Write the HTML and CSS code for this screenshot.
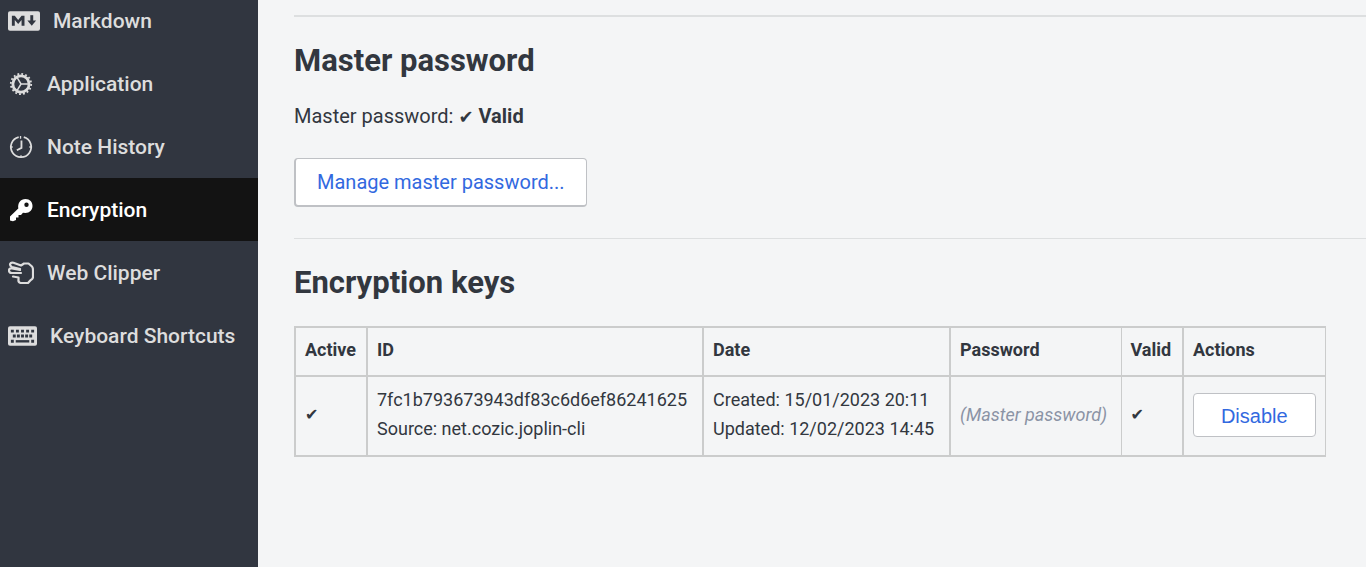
FILE: index.html
```html
<!DOCTYPE html>
<html lang="en">
<head>
<meta charset="utf-8">
<title>Encryption</title>
<link rel="stylesheet" href="styles.css">
</head>
<body>
<div class="app">
  <nav class="sidebar">
    <a class="item" href="#markdown">
      <svg class="icon icon-xl" viewBox="0 0 33 22" aria-hidden="true"><rect y="1" width="33" height="20" rx="2" fill="currentColor"/><path d="M4 16V5.500h3l3.500 4.500L14 5.500h3V16h-3V10l-3.500 4.200L7 10v6z" fill="#313640"/><path d="M24.500 5v7" stroke="#313640" stroke-width="3"/><path d="M20 10.500h9l-4.500 5.500z" fill="#313640"/></svg>
      <span>Markdown</span></a>
    <a class="item" href="#application">
      <svg class="icon" viewBox="0 0 26 26" fill="none" stroke="currentColor" aria-hidden="true"><circle cx="13" cy="13" r="8.800" stroke-width="3"/><circle cx="13" cy="13" r="11" stroke-width="2" stroke-dasharray="2 2.320"/><path d="M13 13h9M13 13L8.500 5.500M13 13L8.500 20.500" stroke-width="1.600"/></svg>
      <span>Application</span></a>
    <a class="item" href="#history">
      <svg class="icon" viewBox="0 0 26 26" fill="none" stroke="currentColor" aria-hidden="true"><path d="M16 2.400A11 11 0 1 1 10.500 2.300" stroke-width="1.900"/><path d="M13.500 6v8L8.500 16.500" stroke-width="2"/><path d="M12.500 1v3M2 13h2M22 13h2M13 22v2" stroke-width="1.400"/></svg>
      <span>Note History</span></a>
    <a class="item active" href="#encryption" aria-current="page">
      <svg class="icon" viewBox="0 0 26 24" aria-hidden="true"><path fill="currentColor" fill-rule="evenodd" d="M17.500 1C22 1 24.500 4 24.500 8s-3 7-7 7l-2.500-.3-2 2.300h-2.500v2.500H8V22l-3 1.200-3-.7v-4L10.300 10.500C9.500 5 12.500 1 17.500 1zM18.500 4.500a2.200 2.200 0 1 0 0 4.400 2.200 2.200 0 1 0 0-4.400z"/></svg>
      <span>Encryption</span></a>
    <a class="item" href="#clipper">
      <svg class="icon" viewBox="0 0 26 24" fill="none" stroke="currentColor" stroke-width="2.200" stroke-linejoin="round" stroke-linecap="round" aria-hidden="true"><path d="M12 8L4 6Q1.500 5 2.200 2.800 3 1 5.500 1.800L13 4.500 16 2.500h4.500L24 5.500Q25 7 25 9v7q0 2-2.500 3.200L20 22h-7.500Q10 21.500 10.500 18.500V16.500L5 15.500M13 12H4Q1 12 1 9.500T4 7.500L12 9"/></svg>
      <span>Web Clipper</span></a>
    <a class="item" href="#shortcuts">
      <svg class="icon icon-lg" viewBox="0 0 30 22" aria-hidden="true"><rect y="1" width="30" height="20" rx="2" fill="currentColor"/><path d="M3 6h24M3 16.500h3M24 16.500h3" stroke="#313640" stroke-width="3" stroke-dasharray="3 2.250"/><path d="M5 11h20" stroke="#313640" stroke-width="3" stroke-dasharray="3 1.250"/><path d="M8 16.500h14" stroke="#313640" stroke-width="2.500"/></svg>
      <span>Keyboard Shortcuts</span></a>
  </nav>
  <main class="content">
    <section class="section">
      <h2 class="title">Master password</h2>
      <p class="status">Master password: <b><span class="tick tick-large">✔</span> Valid</b></p>
      <button class="button button-large" type="button">Manage master password...</button>
    </section>
    <section class="section section-keys">
      <h2 class="title">Encryption keys</h2>
      <table class="keys">
        <colgroup><col class="col-active"><col class="col-id"><col class="col-date"><col class="col-password"><col class="col-valid"><col class="col-actions"></colgroup>
        <thead><tr><th>Active</th><th>ID</th><th>Date</th><th>Password</th><th>Valid</th><th>Actions</th></tr></thead>
        <tbody><tr>
          <td><span class="tick">✔</span></td>
          <td>7fc1b793673943df83c6d6ef86241625<br>Source: net.cozic.joplin-cli</td>
          <td>Created: 15/01/2023 20:11<br>Updated: 12/02/2023 14:45</td>
          <td class="muted">(Master password)</td>
          <td><span class="tick">✔</span></td>
          <td><button class="button button-small" type="button">Disable</button></td>
        </tr></tbody>
      </table>
    </section>
  </main>
</div>
</body>
</html>
```
FILE: styles.css
```css
* { box-sizing: border-box; }
body {
  margin: 0;
  background: #f4f5f6;
  color: #32373f;
  font-family: Roboto, "Liberation Sans", sans-serif;
  font-size: 20px;
  line-height: 29px;
}
.app { display: flex; min-height: 100vh; overflow: hidden; }
.sidebar {
  flex: 0 0 258px;
  margin-top: -11px;
  background: #313640;
}
.item {
  display: flex;
  align-items: center;
  gap: 13px;
  height: 63px;
  padding: 1px 0 0 8px;
  color: #dddddd;
  font-size: 21px;
  font-weight: 500;
  text-decoration: none;
  white-space: nowrap;
}
.item.active { background: #131313; color: #ffffff; }
.icon { flex: none; width: 26px; height: 24px; }
.icon-lg { width: 29px; height: 22px; }
.icon-xl { width: 32px; height: 22px; }
.content { flex: 1; min-width: 0; padding: 15px 0 0 36px; }
.section { border-top: 2px solid #dddfe0; padding-top: 25px; }
.section-keys { margin-top: 31px; border-top-width: 1px; }
.title { margin: 0; font-size: 31px; font-weight: 700; line-height: 38px; }
.status { margin: 21px 0 26px; line-height: 30px; }
.tick { font-family: "DejaVu Sans", sans-serif; font-size: 16px; font-weight: 400; }
.tick-large { font-size: 18px; }
.button {
  display: block;
  border: 1px solid #bfc1c5;
  border-radius: 4px;
  background: #ffffff;
  color: #3269df;
  font-family: "Liberation Sans", Arial, sans-serif;
  font-size: 20px;
}
.button-large {
  height: 49px;
  padding: 0 21px;
  border-width: 1px 1px 2px 2px;
  font-family: Roboto, sans-serif;
}
.button-small { width: 100%; height: 44px; padding: 2px 24px 0; }
.keys { margin-top: 24px; border-collapse: collapse; font-size: 18px; }
.col-active { width: 72px; }
.col-id { width: 336px; }
.col-date { width: 247px; }
.col-password { width: 171px; }
.col-valid { width: 62px; }
.col-actions { width: 142px; }
.keys th, .keys td {
  padding: 7px 9px 11px;
  border: 2px solid #cbcccc;
  text-align: left;
  vertical-align: middle;
  white-space: nowrap;
}
.keys th { height: 49px; font-weight: 700; }
.keys td { height: 80px; }
.keys td:last-child { padding-bottom: 9px; }
.keys tr > :nth-child(4) { border-right-width: 1px; }
.keys tr > :nth-child(5) { border-left-width: 1px; }
.keys tr > :last-child { border-right-width: 1px; }
.keys .muted { color: #8b93a5; font-style: italic; }
```
